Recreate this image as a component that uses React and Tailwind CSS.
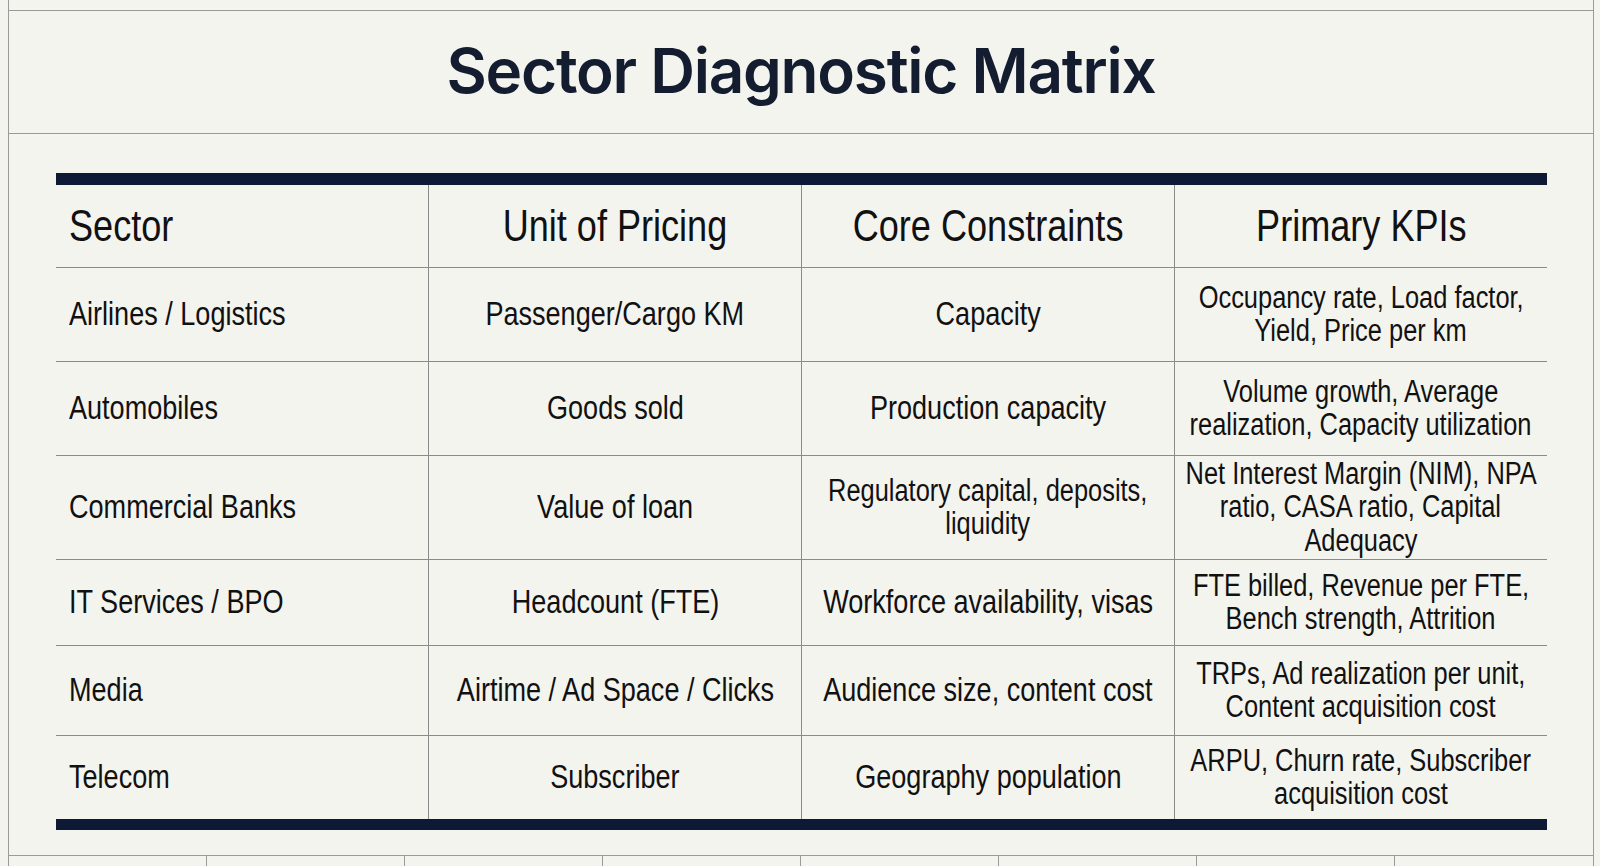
import React from 'react'

const rows = [
  {
    h: 'h-[94px]',
    sector: 'Airlines / Logistics',
    unit: ['Passenger/Cargo KM'],
    constraint: ['Capacity'],
    kpis: ['Occupancy rate, Load factor,', 'Yield, Price per km'],
  },
  {
    h: 'h-[94px]',
    sector: 'Automobiles',
    unit: ['Goods sold'],
    constraint: ['Production capacity'],
    kpis: ['Volume growth, Average', 'realization, Capacity utilization'],
  },
  {
    h: 'h-[104px]',
    sector: 'Commercial Banks',
    unit: ['Value of loan'],
    constraint: ['Regulatory capital, deposits,', 'liquidity'],
    kpis: ['Net Interest Margin (NIM), NPA', 'ratio, CASA ratio, Capital', 'Adequacy'],
  },
  {
    h: 'h-[86px]',
    sector: 'IT Services / BPO',
    unit: ['Headcount (FTE)'],
    constraint: ['Workforce availability, visas'],
    kpis: ['FTE billed, Revenue per FTE,', 'Bench strength, Attrition'],
  },
  {
    h: 'h-[90px]',
    sector: 'Media',
    unit: ['Airtime / Ad Space / Clicks'],
    constraint: ['Audience size, content cost'],
    kpis: ['TRPs, Ad realization per unit,', 'Content acquisition cost'],
  },
  {
    h: 'h-[89px]',
    sector: 'Telecom',
    unit: ['Subscriber'],
    constraint: ['Geography population'],
    kpis: ['ARPU, Churn rate, Subscriber', 'acquisition cost'],
  },
]

// Arial Narrow look: Liberation Sans squeezed to 82% wide
const Narrow = ({ children, left }) => (
  <span
    className={`inline-block shrink-0 whitespace-nowrap scale-x-[0.82] ${left ? 'origin-left' : 'origin-center'}`}
  >
    {children}
  </span>
)

const Lines = ({ lines, size }) => {
  const multi = lines.length > 1
  const text = size || (multi ? 'text-[31px] leading-[1.08]' : 'text-[33px] leading-tight')
  return (
    <div className={`flex flex-col items-center ${text}`}>
      {lines.map((l, i) => (
        <div key={i} className="flex justify-center w-full">
          <Narrow>{l}</Narrow>
        </div>
      ))}
    </div>
  )
}

const cellLine = 'border-[#8a8a8a]'

const App = () => {
  return (
    <div className="w-[1600px] h-[866px] bg-[#f4f4ef] overflow-hidden">
      <div className="ml-[8px] w-[1586px] h-full border-x border-[#9a9a9a] flex flex-col">
        <div className="h-[11px] border-b border-[#9a9a9a]" />

        <div className="h-[123px] border-b border-[#9a9a9a] pt-[29px] text-center">
          <h1 className="font-['Inter','Noto_Sans',sans-serif] font-semibold text-[62px] leading-none tracking-[-0.02em] text-[#141c30]">
            Sector Diagnostic Matrix
          </h1>
        </div>

        <div className="h-[722px] border-b border-[#9a9a9a] pt-[39px]">
          <table className="font-['Liberation_Sans','Arial',sans-serif] ml-[47px] w-[1491px] table-fixed border-collapse text-[#111]">
            <thead>
              <tr className="h-[88px] border-t-[12px] border-[#0e1a35]">
                <th className={`w-1/4 text-left font-normal text-[44px] pl-[13px] border-b border-r ${cellLine}`}>
                  <Narrow left>Sector</Narrow>
                </th>
                <th className={`w-1/4 font-normal border-b border-r ${cellLine}`}>
                  <Lines lines={['Unit of Pricing']} size="text-[44px] leading-tight" />
                </th>
                <th className={`w-1/4 font-normal border-b border-r ${cellLine}`}>
                  <Lines lines={['Core Constraints']} size="text-[44px] leading-tight" />
                </th>
                <th className={`w-1/4 font-normal border-b ${cellLine}`}>
                  <Lines lines={['Primary KPIs']} size="text-[44px] leading-tight" />
                </th>
              </tr>
            </thead>
            <tbody>
              {rows.map((r, i) => {
                const last = i === rows.length - 1
                const line = last ? '' : 'border-b'
                return (
                  <tr key={r.sector} className={`${r.h} ${last ? 'border-b-[11px] border-[#0e1a35]' : ''}`}>
                    <td className={`pl-[13px] text-[33px] leading-tight border-r ${line} ${cellLine}`}>
                      <Narrow left>{r.sector}</Narrow>
                    </td>
                    <td className={`border-r ${line} ${cellLine}`}>
                      <Lines lines={r.unit} />
                    </td>
                    <td className={`border-r ${line} ${cellLine}`}>
                      <Lines lines={r.constraint} />
                    </td>
                    <td className={`${line} ${cellLine}`}>
                      <Lines lines={r.kpis} />
                    </td>
                  </tr>
                )
              })}
            </tbody>
          </table>
        </div>

        <div className="flex-1 flex">
          {[0, 1, 2, 3, 4, 5, 6].map((n) => (
            <div key={n} className="w-[198px] shrink-0 border-r border-[#9a9a9a]" />
          ))}
        </div>
      </div>
    </div>
  )
}

export default App
